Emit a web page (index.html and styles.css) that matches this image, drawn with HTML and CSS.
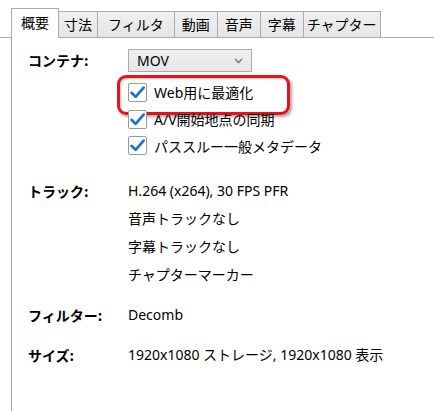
FILE: index.html
```html
<!DOCTYPE html>
<html lang="ja">
<head>
<meta charset="utf-8">
<title>概要</title>
<link rel="stylesheet" href="styles.css">
</head>
<body>
<div class="window">
  <div class="tabs">
    <div class="tab active">概要</div>
    <div class="tab tab-narrow">寸法</div>
    <div class="tab tab-wide">フィルタ</div>
    <div class="tab">動画</div>
    <div class="tab">音声</div>
    <div class="tab">字幕</div>
    <div class="tab tab-long">チャプター</div>
  </div>
  <div class="panel">
    <div class="details">
      <div class="label label-container">コンテナ:</div>
      <div class="value">
        <div class="select">
          <span>MOV</span>
          <svg class="chevron" width="9" height="6" viewBox="0 0 9 6"><path d="M1 1 L4.5 4.5 L8 1" fill="none" stroke="#6d6d6d" stroke-width="1.3"/></svg>
        </div>
        <div class="options">
          <label class="option marked">
            <span class="box"><svg width="15" height="13" viewBox="0 0 15 13"><path d="M1.5 6.8 L5.6 10.8 L13.6 1.6" fill="none" stroke="#1a6fd0" stroke-width="2.6" stroke-linecap="round" stroke-linejoin="round"/></svg></span>
            <span>Web用に最適化</span>
          </label>
          <label class="option">
            <span class="box"><svg width="15" height="13" viewBox="0 0 15 13"><path d="M1.5 6.8 L5.6 10.8 L13.6 1.6" fill="none" stroke="#1a6fd0" stroke-width="2.6" stroke-linecap="round" stroke-linejoin="round"/></svg></span>
            <span>A/V開始地点の同期</span>
          </label>
          <label class="option">
            <span class="box"><svg width="15" height="13" viewBox="0 0 15 13"><path d="M1.5 6.8 L5.6 10.8 L13.6 1.6" fill="none" stroke="#1a6fd0" stroke-width="2.6" stroke-linecap="round" stroke-linejoin="round"/></svg></span>
            <span>パススルー一般メタデータ</span>
          </label>
        </div>
      </div>

      <div class="label label-track">トラック:</div>
      <div class="value lines track">
        <div>H.264 (x264), 30 FPS PFR</div>
        <div>音声トラックなし</div>
        <div>字幕トラックなし</div>
        <div>チャプターマーカー</div>
      </div>

      <div class="label">フィルター:</div>
      <div class="value lines"><div>Decomb</div></div>

      <div class="label">サイズ:</div>
      <div class="value lines"><div>1920x1080 ストレージ, 1920x1080 表示</div></div>
    </div>
  </div>
</div>
</body>
</html>
```

FILE: styles.css
```css
* {
  box-sizing: border-box;
}

html, body {
  margin: 0;
  padding: 0;
  background: #ffffff;
}

body {
  width: 434px;
  height: 411px;
  overflow: hidden;
  font-family: "Noto Sans", "Noto Sans CJK JP", sans-serif;
  font-size: 14px;
  color: #000;
}

.window {
  padding-top: 9px;
  height: 100%;
  display: flex;
  flex-direction: column;
}

/* tab strip */
.tabs {
  display: flex;
  align-items: flex-end;
  padding-left: 11px;
  border-bottom: 1px solid #acacac;
  height: 29px;
}

.tab {
  height: 26px;
  line-height: 24px;
  padding: 0 7px;
  border: 1px solid #acacac;
  border-bottom: none;
  border-left: none;
  background: linear-gradient(#f0f0f0, #e5e5e5);
  font-family: "Noto Sans CJK JP", sans-serif;
  font-size: 14px;
  white-space: nowrap;
}

.tab-narrow {
  padding: 0 5px;
}

.tab-wide {
  padding: 0 10px;
}

.tab-long {
  padding: 0 3px;
}

.tab.active {
  height: 30px;
  line-height: 27px;
  padding: 0 9px;
  border-left: 1px solid #acacac;
  background: #fff;
  margin-bottom: -1px;
}

/* content pane */
.panel {
  flex: 1;
  margin-left: 11px;
  border-left: 1px solid #a6a6a6;
  padding-top: 11px;
}

.details {
  display: grid;
  grid-template-columns: 100px 1fr;
  row-gap: 12px;
  padding-left: 16px;
}

.label {
  font-family: "Noto Sans CJK JP", sans-serif;
  font-weight: 700;
  line-height: 28px;
  white-space: nowrap;
}

.label-container {
  line-height: 23px;
}

.label-track,
.track {
  margin-top: 6px;
}

.value.lines > div {
  line-height: 28px;
  height: 28px;
  white-space: nowrap;
}

/* dropdown */
.select {
  width: 124px;
  height: 23px;
  border: 1px solid #acacac;
  background: linear-gradient(#f0f0f0, #e6e6e6);
  display: flex;
  align-items: center;
  justify-content: space-between;
  padding: 0 8px 0 8px;
  line-height: 21px;
}

.chevron {
  margin-top: 1px;
}

/* checkbox list */
.options {
  margin-top: 6px;
  display: flex;
  flex-direction: column;
}

.option {
  position: relative;
  display: flex;
  align-items: center;
  gap: 7px;
  height: 26.5px;
  white-space: nowrap;
}

.option:first-child {
  height: 28px;
}

.box {
  width: 19px;
  height: 19px;
  border: 1px solid #9a9a9a;
  border-radius: 2px;
  background: #fff;
  display: flex;
  align-items: center;
  justify-content: center;
  flex: none;
}

/* red ring drawn around the first option */
.marked::after {
  content: "";
  position: absolute;
  left: -11px;
  top: -3px;
  width: 167px;
  height: 34px;
  border: 3.5px solid #e3121b;
  border-radius: 9px;
  box-shadow: 2px 2px 3px rgba(0, 0, 0, 0.35), inset 1px 1px 2px rgba(0, 0, 0, 0.25);
  pointer-events: none;
}
```
